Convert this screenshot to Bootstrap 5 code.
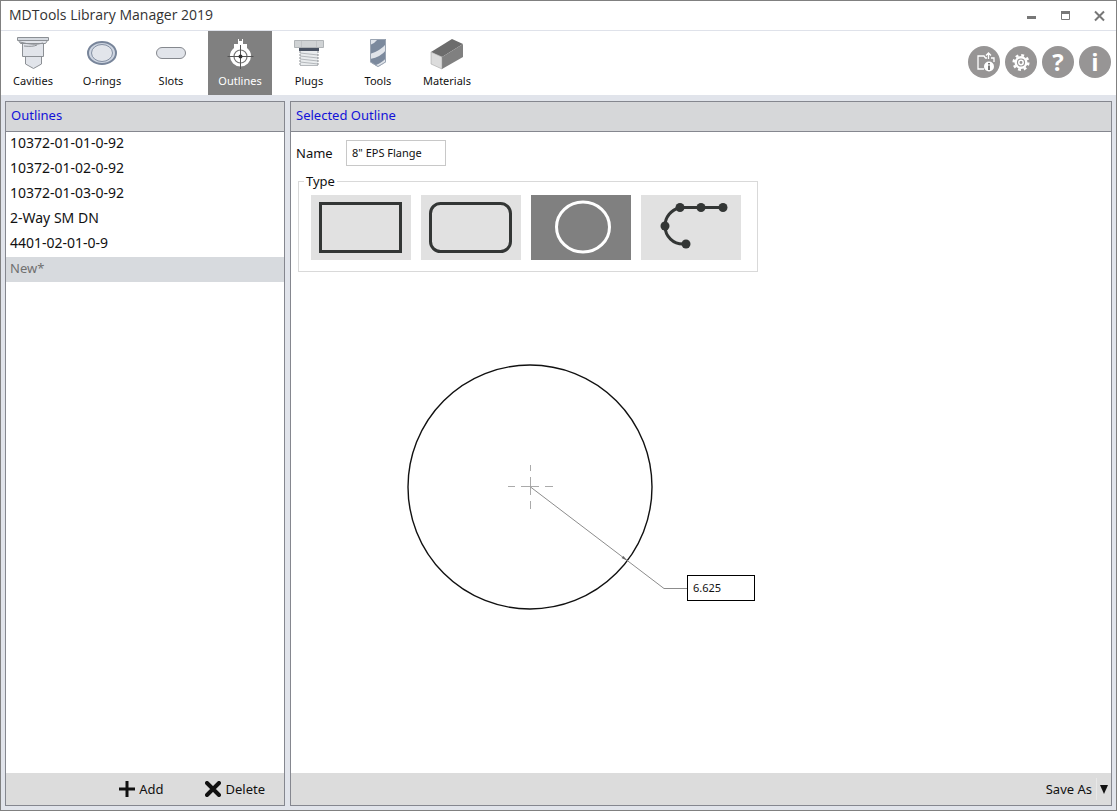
<!DOCTYPE html>
<html lang="en">
<head>
<meta charset="utf-8">
<meta name="viewport" content="width=device-width, initial-scale=1">
<title>MDTools Library Manager 2019</title>
<link href="https://cdn.jsdelivr.net/npm/bootstrap@5.3.0/dist/css/bootstrap.min.css" rel="stylesheet">
<style>
body{font-family:"Noto Sans","Open Sans",sans-serif;font-size:13px;line-height:20px;color:#111;background:#fff}
button,input{font-family:inherit}
.window{border:1px solid #808080;background:#e1e4eb}
.titlebar{height:30px;border-bottom:1px solid #dfe2ea}
.titlebar h1{font-size:14px;line-height:28px;font-weight:400;color:#333;font-family:"Open Sans",sans-serif}
.win-btn,.tool,.round-btn,.act,.shape{border:0;padding:0;background:none;color:inherit}
.win-btn{width:34px;height:29px}
.win-btn svg,.round-btn svg,.shape svg{display:block;margin:auto}
.toolbar{gap:5px}
.tool{width:64px;height:64px;font-size:11px;line-height:16px;padding-top:5px;display:flex;flex-direction:column;align-items:center;gap:3px}
.tool.active{background:#808080;color:#fff}
.help-bar{gap:5px;padding:0 5px 2px}
.round-btn{width:32px;height:32px;border-radius:50%;background:#979595;color:#fff;font:700 24px/32px "Open Sans",sans-serif}
.panes{gap:5px;padding:6px 4px 4px;min-height:0}
.pane{border:1px solid #85878f;background:#fff}
.side{width:280px}
.pane h2{height:30px;margin:0;padding:0 5px;font-size:13px;line-height:27px;font-weight:400;color:#1212d8;background:#d6d7d9;border-bottom:1px solid #85878f}
.outline-item{display:block;height:25px;padding:0 4px;font-size:14px;line-height:22px;color:#111;text-decoration:none}
.outline-item.active{background:#d7dade;color:#707070;font-size:13px}
.foot{height:32px;background:#dcdcdc}
.side .foot{gap:42px;padding-right:19px}
.act{display:flex;align-items:center;gap:4px}
.form-area{padding:8px 5px 0}
.name-label{width:50px}
.name-box,.dim-box{border:1px solid #c8c8c8;border-radius:0;padding:0 5px 2px;font-size:11px;color:#111;background:#fff}
.name-box{width:100px;height:26px}
.type-box{max-width:460px;height:101px;border:1px solid #d9d9d9;margin:5px 0 0 2px;padding:0 5px}
.type-box legend{float:none;width:auto;margin:0;padding:0 2px;font-size:13px;line-height:20px}
.shapes{gap:10px;padding:4px 7px 0}
.shape{width:100px;height:65px;background:#e1e1e1}
.shape.active{background:#808080}
.dim-box{width:68px;height:26px;border-color:#000;left:396px;top:303px}
.split{border-left:1px solid #e8e8e8;height:22px;padding:0 3px;margin-left:4px}
</style>
</head>
<body>
<div class="window min-vh-100 d-flex flex-column">
<header class="titlebar bg-white d-flex justify-content-between ps-2">
<h1 class="m-0">MDTools Library Manager 2019</h1>
<div class="d-flex">
<button class="win-btn" aria-label="Minimize"><svg width="12" height="12"><path d="M2 7.500h9" stroke="#777" stroke-width="3"/></svg></button>
<button class="win-btn" aria-label="Maximize"><svg width="12" height="12"><path d="M2.500 1.500h8v8h-8z" fill="none" stroke="#777"/><path d="M2 2.500h9" stroke="#777" stroke-width="3"/></svg></button>
<button class="win-btn" aria-label="Close"><svg width="12" height="12"><path d="M2 1.500l9 9M11 1.500l-9 9" stroke="#777" stroke-width="2"/></svg></button>
</div>
</header>
<div class="bg-white d-flex justify-content-between align-items-center">
<nav class="toolbar d-flex">
<button class="tool"><svg width="40" height="34" fill="#e1e4ea" stroke="#8c9095" stroke-width="1"><path d="M12.500 20.500h16v7.500l-8 4.500-8-4.500z"/><path d="M9.500 7h21v13.500h-21z"/><path d="M5.500 4.500h29l-2 3h-25z"/><path d="M4.500 1.500h31v3h-31z" fill="#d5d9df"/><path d="M7 6q14 4 23 1M11 10q9 1 13-1" fill="none"/></svg>Cavities</button>
<button class="tool"><svg width="40" height="34"><ellipse cx="20" cy="17" rx="14" ry="11" fill="#cfd6e2" stroke="#78859a" stroke-width="2"/><ellipse cx="20" cy="17" rx="10.500" ry="8.500" fill="#e2e5eb" stroke="#8490a3"/></svg>O-rings</button>
<button class="tool"><svg width="40" height="34"><rect x="5.500" y="11.500" width="29" height="11" rx="5.500" fill="#e1e4ea" stroke="#85888e"/></svg>Slots</button>
<button class="tool active" aria-current="page"><svg width="40" height="34"><path d="M18 3h1v2h3V3h1v5h4v4q4 3 4 8a10.500 10.500 0 0 1-21 0q0-5 4-8V8h4z" fill="#fff"/><circle cx="20.500" cy="20.500" r="6.500" fill="none" stroke="#777" stroke-width="1.200"/><path d="M7.500 20.500h26M20.500 9v24" stroke="#555"/><circle cx="20.500" cy="20.500" r="2" fill="#333"/></svg>Outlines</button>
<button class="tool"><svg width="40" height="34"><path d="M5.500 4.500h29v7h-29z" fill="#d0d3d5" stroke="#b0b4b7"/><path d="M12.500 5v6M27.500 5v6" stroke="#c0c3c6"/><path d="M10 12h20v3H10z" fill="#495262"/><path d="M11 15h18v15H11z" fill="#e8ebed"/><path d="M11 17l18 2M11 20l18 2M11 23l18 2M11 26l18 2M11 29.500h18" stroke="#b4b8bc"/><path d="M11 15v15M29 15v15" stroke="#8d9195" stroke-dasharray="2 1"/></svg>Plugs</button>
<button class="tool"><svg width="40" height="34"><path d="M12 3h16v23l-8 5-8-5z" fill="#7b899d"/><path d="M12 3h8q-3 4-8 6zM12 18q10-3 16-10v6q-5 7-16 9zM18 29q7-3 10-7v4l-8 5z" fill="#e0e4ea"/><path d="M12.500 3.500h15V26L20 30.500 12.500 26z" fill="none" stroke="#9aa4b2"/></svg>Tools</button>
<button class="tool"><svg width="40" height="34"><path d="M4 16L25 3l11 5-21 13z" fill="#6c6c6c"/><path d="M15 21L36 8v13L15 33z" fill="#808080"/><path d="M4 16l11 5v12L4 28z" fill="#dcdcdc" stroke="#999" stroke-width=".5"/></svg>Materials</button>
</nav>
<div class="help-bar d-flex">
<button class="round-btn" aria-label="Open library"><svg width="32" height="32" fill="none" stroke="#fff" stroke-width="1.300"><path d="M16 23h-6V10h6l1.500 2H19M23 12h3v4M20.500 13V7M18 9.500L20.500 7 23 9.500"/><circle cx="21" cy="20.500" r="5" fill="#fff" stroke="none"/><path d="M21 17v1.500M21 19.500v4.500" stroke="#777" stroke-width="2"/></svg></button>
<button class="round-btn" aria-label="Settings"><svg width="32" height="32" fill="none" stroke="#fff"><circle cx="16" cy="16.500" r="7.300" stroke-width="2.500" stroke-dasharray="2.867 2.867"/><circle cx="16" cy="16.500" r="5.300" stroke-width="2.400"/><circle cx="16" cy="16.500" r="2.200" stroke-width="1.500"/></svg></button>
<button class="round-btn">?</button>
<button class="round-btn">i</button>
</div>
</div>
<main class="panes d-flex flex-fill">
<section class="pane side flex-shrink-0 d-flex flex-column">
<h2>Outlines</h2>
<nav class="flex-fill">
<a class="outline-item" href="#">10372-01-01-0-92</a>
<a class="outline-item" href="#">10372-01-02-0-92</a>
<a class="outline-item" href="#">10372-01-03-0-92</a>
<a class="outline-item" href="#">2-Way SM DN</a>
<a class="outline-item" href="#">4401-02-01-0-9</a>
<a class="outline-item active" href="#">New*</a>
</nav>
<div class="foot d-flex justify-content-end">
<button class="act"><svg width="16" height="16"><path d="M8 0v16M0 8h16" stroke="#111" stroke-width="3"/></svg>Add</button>
<button class="act"><svg width="16" height="16"><path d="M2 2l12 12M14 2L2 14" stroke="#111" stroke-width="4" stroke-linecap="round"/></svg>Delete</button>
</div>
</section>
<section class="pane flex-fill d-flex flex-column">
<h2>Selected Outline</h2>
<div class="form-area">
<div class="d-flex align-items-center"><label class="name-label" for="name">Name</label><input class="name-box" id="name" type="text" value='8" EPS Flange'></div>
<fieldset class="type-box">
<legend>Type</legend>
<div class="shapes d-flex">
<button class="shape" aria-label="Rectangle"><svg width="100" height="65"><rect x="9.500" y="8.500" width="80" height="48" fill="none" stroke="#333635" stroke-width="3"/></svg></button>
<button class="shape" aria-label="Rounded rectangle"><svg width="100" height="65"><rect x="9.500" y="8.500" width="80" height="48" rx="10" fill="none" stroke="#333635" stroke-width="3"/></svg></button>
<button class="shape active" aria-label="Circle" aria-pressed="true"><svg width="100" height="65"><ellipse cx="52" cy="32" rx="26.500" ry="25" fill="none" stroke="#fff" stroke-width="3"/></svg></button>
<button class="shape" aria-label="Path"><svg width="100" height="65" fill="#333635"><path d="M82 12.500H39C30 15 24 22 24 31c0 10 8 19 20 18" fill="none" stroke="#333635" stroke-width="3"/><circle cx="39" cy="12.500" r="4.500"/><circle cx="60" cy="12.500" r="4.500"/><circle cx="82" cy="12.500" r="4.500"/><circle cx="24" cy="31" r="4.500"/><circle cx="45" cy="49" r="4.500"/></svg></button>
</div>
</fieldset>
</div>
<div class="position-relative flex-fill">
<svg class="d-block" width="470" height="350" fill="none"><circle cx="239" cy="215" r="122" stroke="#111" stroke-width="1.400"/><path d="M217 214.500h7M230 214.500h18M254 214.500h8M239.500 193v6M239.500 205v18M239.500 229v8" stroke="#aaa"/><path d="M239.500 215L373 316.500h23" stroke="#8c8c8c"/><path d="M336 288.500l-5.500-2.500 2-2z" fill="#666"/></svg>
<input class="dim-box position-absolute" type="text" aria-label="Diameter" value="6.625">
</div>
<div class="foot d-flex justify-content-end align-items-center">
<button class="act">Save As</button>
<button class="act split" aria-label="More save options"><svg width="8" height="9"><path d="M0 0h8L4 9z" fill="#111"/></svg></button>
</div>
</section>
</main>
</div>
</body>
</html>
